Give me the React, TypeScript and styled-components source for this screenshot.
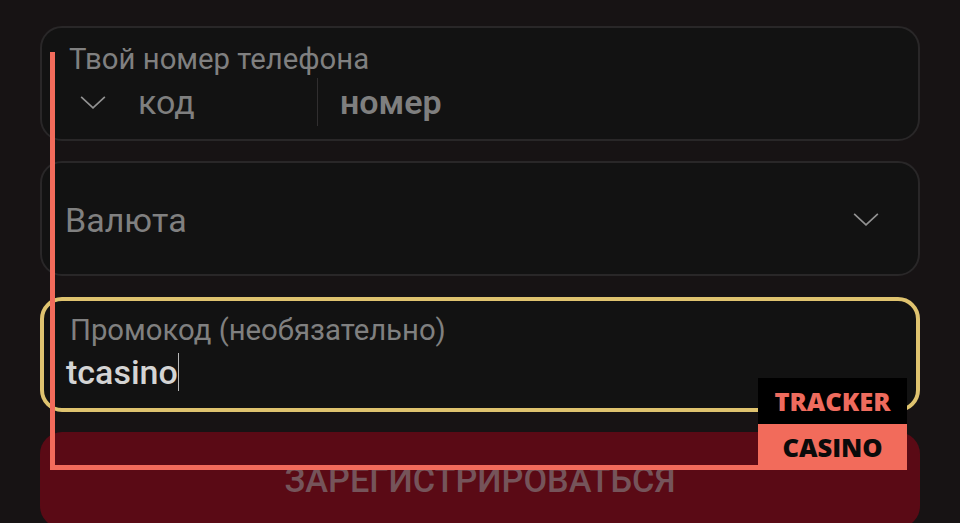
import React from 'react'
import styled, { createGlobalStyle } from 'styled-components'

const GlobalStyle = createGlobalStyle`
  html, body {
    margin: 0;
    padding: 0;
    background: #171314;
  }
`

const Chevron = ({ size = 28 }: { size?: number }) => (
  <svg width={size} height={size * 0.6} viewBox="0 0 28 17" fill="none" aria-hidden="true">
    <path d="M2 3 L14 14 L26 3" stroke="#929292" strokeWidth="1.7" />
  </svg>
)

const App = () => {
  return (
    <>
      <GlobalStyle />
      <Page>
        <Form>
          <Field>
            <FloatLabel>Твой номер телефона</FloatLabel>
            <PhoneRow>
              <CodePart>
                <Chevron />
                <CodeText>код</CodeText>
              </CodePart>
              <NumberText>номер</NumberText>
            </PhoneRow>
          </Field>

          <SelectField>
            <SelectText>Валюта</SelectText>
            <Chevron />
          </SelectField>

          <Field $active>
            <FloatLabel>Промокод (необязательно)</FloatLabel>
            <PromoValue>
              tcasino
              <Caret />
            </PromoValue>
          </Field>

          <SubmitButton type="button">ЗАРЕГИСТРИРОВАТЬСЯ</SubmitButton>
        </Form>

        <TrackerFrame aria-hidden="true" />
        <Badge>
          <BadgeTop>TRACKER</BadgeTop>
          <BadgeBottom>CASINO</BadgeBottom>
        </Badge>
      </Page>
    </>
  )
}

const Page = styled.div`
  position: relative;
  width: 960px;
  height: 523px;
  overflow: hidden;
  background: #171314;
  font-family: Roboto, 'Liberation Sans', sans-serif;
`

const Form = styled.form`
  display: flex;
  flex-direction: column;
  gap: 21px;
  padding: 26px 40px 0;
`

const Field = styled.div<{ $active?: boolean }>`
  box-sizing: border-box;
  height: 115px;
  margin-bottom: -1px;
  padding: ${({ $active }) => ($active ? '12px 26px 0' : '14px 27px 0')};
  background: #121212;
  border: ${({ $active }) => ($active ? '4px solid #dfc36f' : '2px solid #292728')};
  border-radius: 22px;
`

const FloatLabel = styled.div`
  height: 34px;
  font-size: 29.3px;
  line-height: 34px;
  color: #808080;
`

const PhoneRow = styled.div`
  display: flex;
  align-items: center;
  height: 50px;
  margin-left: -3px;
  margin-top: 1px;
`

const CodePart = styled.div`
  display: flex;
  align-items: center;
  gap: 31px;
  box-sizing: border-box;
  width: 252px;
  height: 48px;
  padding-left: 13px;
  border-right: 1.5px solid #302e2f;
`

const CodeText = styled.span`
  font-size: 34px;
  font-weight: 450;
  color: #7f7f7f;
`

const NumberText = styled.span`
  margin-left: 22px;
  font-size: 34px;
  font-weight: 600;
  color: #7f7f7f;
`

const SelectField = styled.div`
  display: flex;
  align-items: center;
  justify-content: space-between;
  box-sizing: border-box;
  height: 115px;
  padding: 2px 38px 0 23px;
  background: #121212;
  border: 2px solid #292728;
  border-radius: 22px;
`

const SelectText = styled.span`
  font-size: 34px;
  color: #808080;
`

const PromoValue = styled.div`
  display: flex;
  align-items: center;
  height: 48px;
  margin-left: -4px;
  margin-top: 1px;
  font-size: 34px;
  font-weight: 500;
  color: #d4d4d4;
`

const Caret = styled.span`
  width: 1.5px;
  height: 38px;
  background: #b8b8b8;
`

const SubmitButton = styled.button`
  flex: none;
  height: 96px;
  padding: 0;
  border: 0;
  border-radius: 22px;
  background: #5a0a15;
  font-family: inherit;
  font-size: 34.3px;
  font-weight: 500;
  color: #75545a;
`

const TrackerFrame = styled.div`
  position: absolute;
  left: 50px;
  top: 52px;
  width: 760px;
  height: 413px;
  border-left: 5px solid #f26b5b;
  border-bottom: 5px solid #f26b5b;
`

const Badge = styled.div`
  position: absolute;
  left: 758px;
  top: 378px;
  width: 149px;
  font-family: 'Open Sans', 'Liberation Sans', sans-serif;
  font-size: 25.5px;
  font-weight: 800;
  text-align: center;
`

const BadgeTop = styled.div`
  height: 46px;
  line-height: 47px;
  background: #000;
  color: #ee6b5d;
`

const BadgeBottom = styled.div`
  height: 46px;
  line-height: 46px;
  background: #f26b5b;
  color: #0b0b0b;
`

export default App
